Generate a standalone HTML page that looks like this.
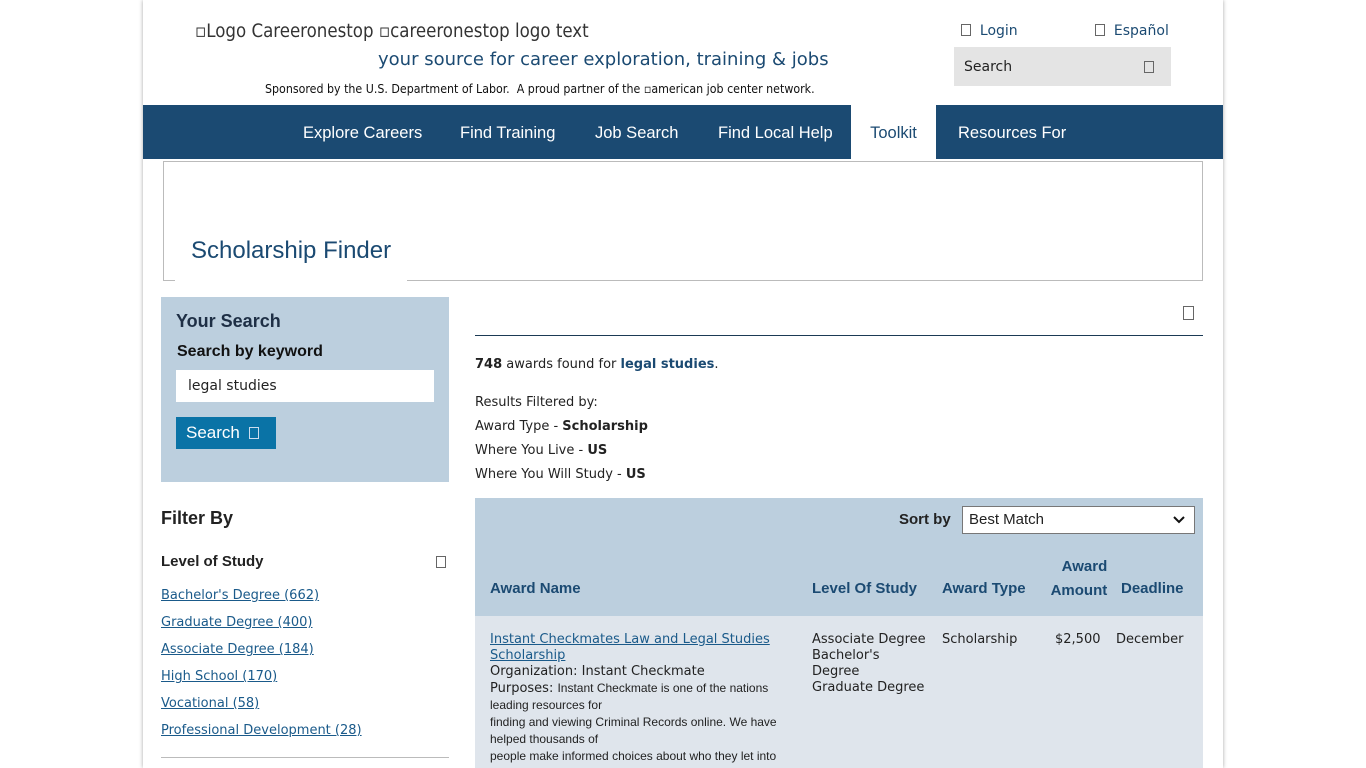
<!DOCTYPE html>
<html><head><meta charset="utf-8"><style>
*{box-sizing:border-box;margin:0;padding:0}
body{background:#fff;font-family:"DejaVu Sans",Verdana,sans-serif;font-size:13px;color:#222;width:1366px;height:768px;overflow:hidden;position:relative}
.page{position:absolute;left:143px;top:0;width:1080px;height:768px;background:#fff;box-shadow:0 0 4px rgba(0,0,0,.35);overflow:hidden}
.abs{position:absolute;white-space:nowrap}
.box{display:inline-block;width:10px;height:12px;border:1px solid #666;vertical-align:-1px}
.nav{position:absolute;left:0;top:105px;width:1080px;height:54px;background:#1b4a72}
.nav span{position:absolute;top:0;height:54px;line-height:56px;color:#fff;font-family:"Liberation Sans",Arial,sans-serif;font-size:16.5px}
a{color:#1a5a8a;text-decoration:underline}
.th{position:absolute;color:#1b4a72;font-weight:bold;font-size:15px;font-family:"Liberation Sans",Arial,sans-serif}
.td{position:absolute;font-size:13px;line-height:16px;color:#222}
</style></head><body>
<div class="page">
<div class="abs" style="left:52px;top:21px;font-family:'DejaVu Sans Condensed','Liberation Sans',sans-serif;font-size:18.5px;color:#333">▫Logo Careeronestop ▫careeronestop logo text</div>
<div class="abs" style="left:235px;top:49px;font-size:18px;color:#1b4a72">your source for career exploration, training &amp; jobs</div>
<div class="abs" style="left:122px;top:82px;font-family:'DejaVu Sans Condensed',sans-serif;font-size:12.3px;color:#111">Sponsored by the U.S. Department of Labor.&nbsp; A proud partner of the ▫american job center network.</div>
<div class="abs" style="left:818px;top:23px;font-size:14px;color:#1b4a72"><span class="box"></span>&nbsp; Login</div>
<div class="abs" style="left:952px;top:23px;font-size:14px;color:#1b4a72"><span class="box"></span>&nbsp; Español</div>
<div class="abs" style="left:811px;top:47px;width:217px;height:39px;background:#e4e4e4;font-size:14px;line-height:41px;padding-left:10px;color:#222">Search<span class="box" style="position:absolute;left:190px;top:14px"></span></div>
<div class="nav">
<span style="left:160px">Explore Careers</span>
<span style="left:317px">Find Training</span>
<span style="left:452px">Job Search</span>
<span style="left:575px">Find Local Help</span>
<span style="left:708px;width:85px;background:#fff;color:#1b4a72;text-align:center">Toolkit</span>
<span style="left:815px">Resources For</span>
</div>
<div class="abs" style="left:20px;top:161px;width:1040px;height:120px;border:1px solid #bbb"></div>
<div class="abs" style="left:32px;top:230px;width:232px;height:55px;background:#fff"></div>
<div class="abs" style="left:48px;top:237px;font-family:'Liberation Sans',Arial,sans-serif;font-size:24px;color:#1b4a72">Scholarship Finder</div>

<div class="abs" style="left:18px;top:297px;width:288px;height:185px;background:#bccfde"></div>
<div class="abs" style="left:33px;top:311px;font-family:'Liberation Sans',Arial,sans-serif;font-weight:bold;font-size:18px;color:#1e2f45">Your Search</div>
<div class="abs" style="left:34px;top:343px;font-family:'Liberation Sans',Arial,sans-serif;font-weight:bold;font-size:16px;color:#111">Search by keyword</div>
<div class="abs" style="left:33px;top:370px;width:258px;height:32px;background:#fff;padding-left:12px;line-height:32px;font-size:14px">legal studies</div>
<div class="abs" style="left:33px;top:417px;width:100px;height:32px;background:#0a73a6;color:#fff;font-family:'Liberation Sans',Arial,sans-serif;font-size:17px;line-height:31px;padding-left:10px">Search &nbsp;<span class="box" style="border-color:#cde"></span></div>

<div class="abs" style="left:18px;top:508px;font-family:'Liberation Sans',Arial,sans-serif;font-weight:bold;font-size:18px;color:#222">Filter By</div>
<div class="abs" style="left:18px;top:553px;font-family:'Liberation Sans',Arial,sans-serif;font-weight:bold;font-size:15px;color:#222">Level of Study</div>
<span class="box abs" style="left:293px;top:556px"></span>
<div class="abs" style="left:18px;top:582px;line-height:27px;font-size:13px">
<a>Bachelor's Degree (662)</a><br><a>Graduate Degree (400)</a><br><a>Associate Degree (184)</a><br><a>High School (170)</a><br><a>Vocational (58)</a><br><a>Professional Development (28)</a></div>
<div class="abs" style="left:18px;top:757px;width:288px;border-top:1px solid #bbb"></div>

<span class="box abs" style="left:1040px;top:306px;height:14px;width:11px"></span>
<div class="abs" style="left:332px;top:335px;width:728px;border-top:1px solid #1b3a55"></div>
<div class="abs" style="left:332px;top:357px"><b>748</b> awards found for <b style="color:#1b4a72">legal studies</b>.</div>
<div class="abs" style="left:332px;top:391px;line-height:24px">Results Filtered by:<br>Award Type - <b>Scholarship</b><br>Where You Live - <b>US</b><br>Where You Will Study - <b>US</b></div>

<div class="abs" style="left:332px;top:498px;width:728px;height:118px;background:#bccfde"></div>
<div class="abs" style="left:332px;top:616px;width:728px;height:152px;background:#dfe5ec"></div>
<div class="abs" style="left:756px;top:511px;font-family:'Liberation Sans',Arial,sans-serif;font-weight:bold;font-size:15px;color:#222">Sort by</div>
<div class="abs" style="left:819px;top:506px;width:233px;height:28px;background:#fff;border:1px solid #777;font-family:'Liberation Sans',Arial,sans-serif;font-size:15px;line-height:26px;padding-left:6px">Best Match<svg style="position:absolute;right:9px;top:9px" width="12" height="8" viewBox="0 0 12 8"><path d="M1 1l5 5 5-5" fill="none" stroke="#111" stroke-width="2"/></svg></div>
<div class="th" style="left:347px;top:580px">Award Name</div>
<div class="th" style="left:669px;top:580px">Level Of Study</div>
<div class="th" style="left:799px;top:580px">Award Type</div>
<div class="th" style="left:902px;top:555px;text-align:right;line-height:24px">&nbsp;&nbsp;&nbsp;&nbsp;Award<br>Amount</div>
<div class="th" style="left:978px;top:580px">Deadline</div>
<div class="td" style="left:347px;top:632px;width:300px"><a>Instant Checkmates Law and Legal Studies Scholarship</a><br>Organization: Instant Checkmate<br>Purposes: <span style="font-family:'Liberation Sans',Arial,sans-serif;font-size:12px">Instant Checkmate is one of the nations<br>leading resources for<br>finding and viewing Criminal Records online. We have<br>helped thousands of<br>people make informed choices about who they let into<br>their lives and help</span></div>
<div class="td" style="left:669px;top:632px">Associate Degree<br>Bachelor's<br>Degree<br>Graduate Degree</div>
<div class="td" style="left:799px;top:632px">Scholarship</div>
<div class="td" style="left:912px;top:632px">$2,500</div>
<div class="td" style="left:973px;top:632px">December</div>
</div>
</body></html>
